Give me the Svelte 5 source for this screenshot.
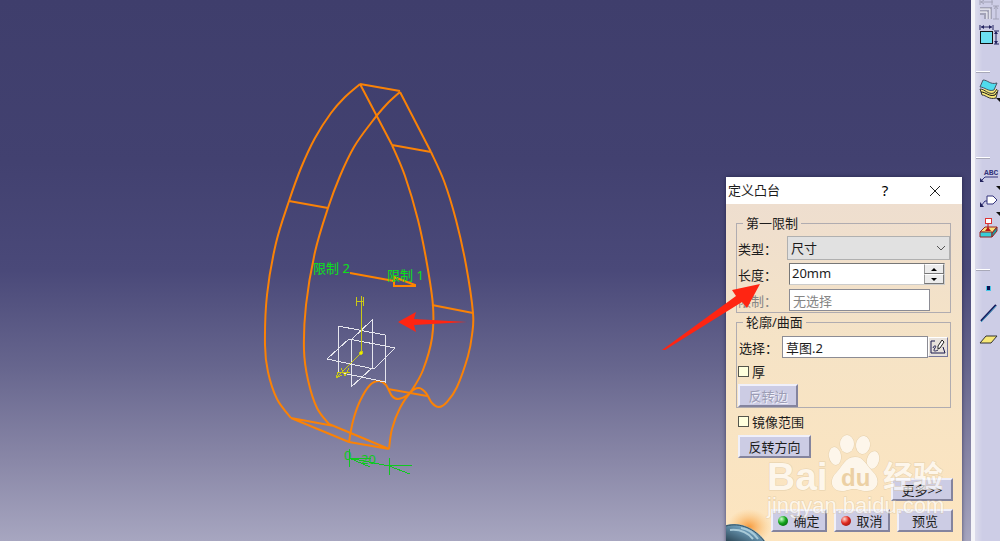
<script>
  let kind = $state("尺寸");
  let length = $state(20);
  let profile = $state("草图.2");
  let thick = $state(false);
  let mirrored = $state(false);

  let lengthText = $derived(length + "mm");

  // Catmull-Rom through all points, written as cubic segments
  function smooth(pts) {
    let d = `M${pts[0][0]} ${pts[0][1]}`;
    for (let i = 0; i < pts.length - 1; i++) {
      const a = pts[i - 1] || pts[i];
      const b = pts[i];
      const c = pts[i + 1];
      const e = pts[i + 2] || c;
      d += `C${b[0] + (c[0] - a[0]) / 6} ${b[1] + (c[1] - a[1]) / 6} ${c[0] - (e[0] - b[0]) / 6} ${c[1] - (e[1] - b[1]) / 6} ${c[0]} ${c[1]}`;
    }
    return d;
  }

  const curves = [
    // left sides, back and front
    [[360, 84], [345, 97], [331, 113], [315, 138], [301, 168], [289, 201], [276, 243], [267, 295], [265, 345], [268, 372], [277, 399], [291, 418]],
    [[400, 92], [386, 105], [371, 123], [354, 147], [340, 176], [328, 208], [315, 252], [306, 305], [304, 350], [308, 380], [317, 408], [329, 424]],
    // right sides
    [[392, 145], [405, 176], [418, 220], [427, 264], [433, 306], [432, 338], [423, 370], [412, 390], [406, 396], [398, 399], [392, 396], [386, 385], [379, 381], [370, 385], [360, 401], [353, 421], [349, 442]],
    [[431, 152], [444, 181], [456, 220], [466, 265], [473, 313], [472, 335], [468, 356], [457, 387], [447, 402], [439, 407], [432, 403], [426, 393], [419, 388], [411, 392], [400, 408], [392, 429], [389, 449]]
  ];

  const edges =
    "M360 84L400 91M360 84L392 145M400 92L431 152M392 145L431 152M289 201L328 208" +
    "M432 305L473 313M388 389L427 396M291 418L334 426M291 418L349 442M329 424L389 449M349 442L389 449";

  const toolGroups = [
    ["grid", "size"],
    ["layers"],
    ["text", "flag", "datum"],
    ["point", "line", "plane"]
  ];
</script>

<div class="app">
  <main class="viewport">
    <svg class="scene" role="img" aria-label="model">
      <g class="wire">
        {#each curves as c}
          <path d={smooth(c)} />
        {/each}
        <path d={edges} />
      </g>
      <g class="planes">
        <path d="M338 326L385 335V382L338 372ZM372 320V368L351 387V340ZM327 359L349 339L395 348L374 369Z" />
      </g>
      <g class="axis">
        <path d="M361 353V308M361 353L336 378M336 378L338 372M336 378L342 375" />
        <path d="M356 297V306M356 301H363M363 297V306M361 296V308" />
        <path d="M341 368L345 376L349 368M338 372H350" />
        <circle cx="361" cy="353" r="1.5" />
      </g>
      <path class="dir" d="M350 273L394 281M415 285L394 277V286H415Z" />
      <g class="dims">
        <path d="M349 449V467M349 458H371M349 458L370 467M349 458L389 466M389 458V475M389 466L412 465M389 466L410 474" />
        <text x="344" y="460">0</text>
        <text x="361" y="464">20</text>
      </g>
      <text class="limit" x="313" y="273">限制 2</text>
      <text class="limit" x="387" y="280">限制 1</text>
      <path class="marker" d="M398 322L416 312L414 319L467 322L414 325L416 332Z" />
    </svg>

    <section class="dialog" aria-label="定义凸台">
      <header>
        <h1>定义凸台</h1>
        <button class="cap" aria-label="help">?</button>
        <button class="cap" aria-label="close">
          <svg width="12" height="12" viewBox="0 0 12 12"><path d="M1 1L11 11M11 1L1 11" /></svg>
        </button>
      </header>

      <div class="body">
        <fieldset>
          <legend>第一限制</legend>
          <div class="row">
            <label for="kind">类型：</label>
            <div class="pick">
              <select id="kind" bind:value={kind}>
                <option>尺寸</option>
                <option>直到下一个</option>
              </select>
              <svg width="10" height="6" viewBox="0 0 10 6"><path d="M1 1L5 5L9 1" /></svg>
            </div>
          </div>
          <div class="row">
            <label for="len">长度：</label>
            <div class="spin">
              <input id="len" type="text" value={lengthText} />
              <div class="steps">
                <button aria-label="up" onclick={() => length++}><svg width="6" height="3"><path d="M0 3L3 0L6 3Z" /></svg></button>
                <button aria-label="down" onclick={() => length--}><svg width="6" height="3"><path d="M0 0L3 3L6 0Z" /></svg></button>
              </div>
            </div>
          </div>
          <div class="row off">
            <label for="lim">限制：</label>
            <input id="lim" class="box" type="text" value="无选择" disabled />
          </div>
        </fieldset>

        <fieldset class="profile">
          <legend>轮廓/曲面</legend>
          <div class="row">
            <label for="prof">选择：</label>
            <input id="prof" class="box" type="text" bind:value={profile} />
            <button class="sketch" aria-label="sketch">
              <svg width="16" height="16" viewBox="0 0 16 16">
                <path d="M5 2H1V14H15L13 8" fill="none" stroke="#18184c" />
                <path d="M3 9C4 6 7 6 5 9S4 13 8 11" fill="none" stroke="#18184c" />
                <path d="M8 10L8 7L12 1L14 3L10 9Z" fill="#fff" stroke="#222" />
              </svg>
            </button>
          </div>
          <label class="check"><input type="checkbox" bind:checked={thick} />厚</label>
          <button class="btn side" disabled>反转边</button>
        </fieldset>

        <label class="check mirror"><input type="checkbox" bind:checked={mirrored} />镜像范围</label>
        <button class="btn reverse">反转方向</button>
        <div class="more"><button class="btn">更多&gt;&gt;</button></div>

        <footer>
          <button class="btn"><i class="dot green"></i>确定</button>
          <button class="btn"><i class="dot red"></i>取消</button>
          <button class="btn">预览</button>
        </footer>
        <svg class="planet" width="44" height="32" viewBox="0 0 44 32" aria-hidden="true">
          <defs>
            <radialGradient id="glow"><stop offset="0" stop-color="#f79a3c" /><stop offset="1" stop-color="#fbc274" stop-opacity="0" /></radialGradient>
            <linearGradient id="globe" x1="1" y1="0" x2="0" y2="1"><stop offset="0" stop-color="#c4dce6" /><stop offset="0.4" stop-color="#6f9fbc" /><stop offset="1" stop-color="#2c4656" /></linearGradient>
          </defs>
          <ellipse cx="23" cy="18" rx="22" ry="18" fill="url(#glow)" />
          <path d="M0 16C14 12 30 19 39 32H0Z" fill="url(#globe)" />
          <path d="M0 17C14 13 29 20 38 32" fill="none" stroke="#36505e" />
          <path d="M4 21C14 20 22 24 27 30M15 19C22 20 28 24 32 30" fill="none" stroke="#a9cad8" stroke-width="2" />
        </svg>
      </div>

      <svg class="watermark" width="190" height="90" viewBox="0 0 190 90" aria-hidden="true">
        <text class="bai" x="5" y="58">Bai</text>
        <g class="paw">
          <ellipse cx="73" cy="24" rx="6" ry="9" transform="rotate(-10 73 24)" />
          <ellipse cx="85" cy="12" rx="7" ry="9" />
          <ellipse cx="101" cy="13" rx="7" ry="9" transform="rotate(8 101 13)" />
          <ellipse cx="111" cy="28" rx="6" ry="9" transform="rotate(15 111 28)" />
          <path d="M93 25C102 25 104 33 111 40C119 48 116 59 105 59C98 59 97 57 92 57S85 59 80 59C69 59 67 48 74 41C81 34 83 25 93 25Z" />
        </g>
        <text class="du" x="79" y="54">du</text>
        <text class="jy" x="121" y="55">经验</text>
        <text class="url" x="5" y="81">jingyan.baidu.com</text>
      </svg>
    </section>

    <svg class="pointer" width="100" height="70" viewBox="0 0 100 70" aria-hidden="true">
      <path d="M0 69L74 15L70 9L98 3L85 27L80 21L3 69Z" />
    </svg>
  </main>

  <nav class="tools">
    {#each toolGroups as group}
      <div class="group">
        {#each group as tool}
          <button class="tool" aria-label={tool}>
            <svg width="24" height="25" viewBox="0 0 24 25">
              {#if tool === "grid"}
                <g fill="none" stroke="#a3a3b8">
                  <path d="M4 5H17M4 3V8M16 3V8M20 9V22M17 9H23M17 22H23M5 5L8 3M5 5L8 7M20 9L18 12M20 9L22 12" />
                  <path d="M4 11H15V22M4 14H12V22M4 17H9V22" stroke-width="2" />
                  <path d="M4 12H14V22M4 15H11V22" stroke="#eee" />
                </g>
              {:else if tool === "size"}
                <rect x="4.500" y="8.500" width="12" height="12" fill="#6de0f2" stroke="#111" />
                <path d="M5 4H16M4 2V7M17 2V7M20 9V21M18 8H23M18 21H23" fill="none" stroke="#222260" />
                <path d="M5 4L8 2V6ZM16 4L13 2V6ZM20 8L18 11H22ZM20 21L18 18H22Z" fill="#222260" />
              {:else if tool === "layers"}
                <path d="M4 12L6 18C10 18 13 23 20 21L22 13" fill="#f7e878" stroke="#333" />
                <path d="M4 12C9 12 12 18 18 16L21 12" fill="#f7e878" stroke="#333" />
                <path d="M5 15C10 15 13 20 19 18L21 15" fill="none" stroke="#111" />
                <path d="M7 3C12 3 14 8 21 6L18 13C12 15 9 10 4 10Z" fill="#4fdced" stroke="#456" />
                <path class="more-mark" d="M20 21H24V25Z" />
              {:else if tool === "text"}
                <text x="8" y="12">ABC</text>
                <path d="M5 18L9 14H22" fill="none" stroke="#34347c" />
                <path d="M4 15L8 19H4Z" fill="#22225c" />
                <path class="more-mark" d="M20 23H24V27Z" />
              {:else if tool === "flag"}
                <path d="M11 7H17L21 11L17 15H11Z" fill="#fff" stroke="#34347c" />
                <path d="M11 12H9L5 17" fill="none" stroke="#34347c" />
                <path d="M4 13L8 18H4Z" fill="#22225c" />
                <path class="more-mark" d="M20 23H24V27Z" />
              {:else if tool === "datum"}
                <path d="M4 17L9 12H21L16 18Z" fill="#f7e07a" stroke="#922" />
                <path d="M4 17H16V22H4Z" fill="#37cfd8" stroke="#922" />
                <path d="M16 18L21 12V16L16 22Z" fill="#189aa0" stroke="#922" />
                <rect x="9.500" y="3.500" width="6" height="5" fill="#fff" stroke="#d33" />
                <path d="M12 9V13" stroke="#b11" />
                <path d="M9 16L12 12L15 16Z" fill="#b11" />
              {:else if tool === "point"}
                <rect x="10" y="11" width="5" height="5" fill="#45c6e8" />
                <rect x="11" y="11" width="3" height="4" fill="#101050" />
              {:else if tool === "line"}
                <path d="M5 20L20 4" stroke="#16165a" stroke-width="2" />
                <path d="M5 21L20 5" stroke="#3a9ac0" />
              {:else}
                <path d="M4 16L10 9H21L15 16Z" fill="#f7e878" stroke="#333" />
              {/if}
            </svg>
          </button>
        {/each}
      </div>
    {/each}
  </nav>
</div>

<style>
  :global(body) { margin: 0; overflow: hidden; }
  .app {
    display: flex;
    height: 100vh;
    overflow: hidden;
    font-family: "Noto Sans", "Noto Sans CJK SC", sans-serif;
    font-size: 13px;
    color: #1c1c1c;
  }
  .viewport {
    position: relative;
    flex: 1;
    overflow: hidden;
    background: linear-gradient(#3f3e6c 0%, #424170 30%, #4a4979 50%, #67668e 68%, #8987a7 85%, #a7a6c0 100%);
  }
  .scene { display: block; width: 100%; height: 100%; fill: none; }
  .wire { stroke: #fa8206; stroke-width: 2; }
  .planes { stroke: #e6e6ee; shape-rendering: crispEdges; }
  .axis { stroke: #c9c916; shape-rendering: crispEdges; }
  .axis circle { fill: #eded00; }
  .dir { stroke: #ff8400; stroke-width: 2; }
  .dims { stroke: #10c820; shape-rendering: crispEdges; }
  .dims text { stroke: none; fill: #10c820; font-size: 13px; }
  .limit { fill: #0be318; font-size: 13px; }
  .marker, .pointer path { fill: #ff2512; }

  .dialog {
    position: absolute;
    top: 177px;
    right: 9px;
    width: 236px;
    box-shadow: 0 0 4px rgba(20, 20, 50, 0.6);
  }
  header { display: flex; align-items: center; height: 27px; padding-right: 2px; background: #fff; }
  h1 { flex: 1; margin: 0; padding: 0 0 2px 2px; font-size: 13px; font-weight: 400; }
  .cap { width: 50px; padding: 0 0 2px; border: 0; background: none; font: inherit; font-size: 15px; }
  .cap svg { fill: none; stroke: #222; vertical-align: middle; }
  .body {
    position: relative;
    padding: 10px 9px 12px 10px;
    background: linear-gradient(#eedecf, #f5e3c6 40%, #fde5bf);
  }
  fieldset {
    min-width: 0;
    margin: 0 2px 0 0;
    padding: 4px 0 1px 1px;
    border: 1px solid #b0acb0;
  }
  legend { margin-left: 5px; padding: 0 3px; line-height: 18px; }
  .row { display: flex; align-items: center; }
  .row label { flex: none; width: 51px; }
  .row + .row { margin-top: 3px; }
  .row + .off { margin-top: 4px; }
  .pick { position: relative; flex: 1; margin-left: -2px; }
  select {
    display: block;
    width: 100%;
    height: 24px;
    padding: 0 3px;
    appearance: none;
    border: 1px solid #b0b0b0;
    border-radius: 0;
    background: #e1e1e1;
    font: inherit;
    color: inherit;
  }
  .pick svg { position: absolute; right: 4px; top: 9px; fill: none; stroke: #555; }
  .spin {
    display: flex;
    flex: 1;
    min-width: 0;
    height: 20px;
    margin-right: 5px;
    border: 1px solid #777;
    border-right-color: #ccc;
    border-bottom-color: #ccc;
    background: #fff;
  }
  .spin input { flex: 1; min-width: 0; padding: 0 2px 2px; border: 0; font: inherit; color: inherit; }
  .steps { display: flex; flex: none; flex-direction: column; width: 20px; }
  .steps button {
    display: flex;
    flex: 1;
    align-items: center;
    justify-content: center;
    padding: 0;
    border: 1px solid;
    border-color: #fff #777 #777 #999;
    background: #ececec;
  }
  .box {
    flex: 1;
    min-width: 0;
    box-sizing: border-box;
    height: 22px;
    padding: 0 3px;
    border: 1px solid #8c8c94;
    background: #fff;
    font: inherit;
    color: inherit;
  }
  .off { color: #858585; }
  .off .box { margin-right: 20px; }
  .profile { padding: 5px 0 0 1px; }
  .profile .row label { width: 43px; padding-left: 1px; }
  .profile .row { padding-right: 2px; }
  .sketch {
    width: 20px;
    height: 20px;
    padding: 0 1px;
    border: 1px solid;
    border-color: #fff #77779a #77779a #fff;
    background: #e8e2dc;
  }
  .sketch svg { display: block; }
  .check { display: flex; align-items: center; gap: 3px; height: 18px; margin-top: 4px; }
  .check input {
    width: 11px;
    height: 11px;
    margin: 0;
    appearance: none;
    border: 1px solid #55554c;
    background: #ffffdd;
  }
  .check input:checked { background: #444; }
  .btn {
    display: flex;
    align-items: center;
    justify-content: center;
    gap: 5px;
    box-sizing: border-box;
    width: 56px;
    height: 23px;
    padding: 0;
    border: 2px solid;
    border-color: #f0f0fa #84849e #84849e #f0f0fa;
    background: #cccce4;
    font: inherit;
    color: inherit;
  }
  .side { width: 60px; margin-top: 4px; }
  .side:disabled { color: #9c9cb4; text-shadow: 1px 1px #f2f2fa; }
  .mirror { margin: 4px 0 0 2px; }
  .reverse { width: 73px; margin: 5px 0 0 2px; }
  .more { display: flex; justify-content: flex-end; margin-top: 20px; }
  .more .btn { width: 62px; }
  footer { display: flex; justify-content: flex-end; gap: 7px; margin-top: 8px; }
  .dot { width: 10px; height: 10px; border-radius: 50%; }
  .green { background: radial-gradient(circle at 35% 30%, #d0ffd0, #14a51c 45%, #064d0a); }
  .red { background: radial-gradient(circle at 35% 30%, #ffd8d0, #e02a20 45%, #7c1010); }
  .planet { position: absolute; left: 0; bottom: 3px; }
  .watermark { position: absolute; left: 36px; top: 255px; pointer-events: none; opacity: 0.68; }
  .watermark text, .paw { fill: #fff; stroke: #dcc8a4; stroke-width: 1; paint-order: stroke; }
  .bai { font: 700 39px "Liberation Sans", sans-serif; }
  .watermark .du { fill: #e6c898; stroke: none; font: 700 24px "Liberation Sans", sans-serif; }
  .jy { font: 700 30px "Noto Sans CJK SC", sans-serif; }
  .url { font: 22px "Liberation Sans", sans-serif; }
  .pointer { position: absolute; top: 281px; right: 209px; pointer-events: none; }

  .tools {
    flex: none;
    width: 24px;
    padding-left: 1px;
    border-left: 4px solid #f4f4f8;
    background: linear-gradient(90deg, #dcdcec, #cdcde6 30%);
    overflow: hidden;
  }
  .group { display: flex; flex-direction: column; gap: 1px; height: 112px; }
  .group::before { content: ""; width: 14px; height: 1px; background: #fff; border-bottom: 1px solid #a8a8b8; }
  .group:nth-child(1) { height: 74px; margin-top: -3px; }
  .group:nth-child(1)::before { display: none; }
  .group:nth-child(2) { height: 86px; }
  .group:nth-child(n + 2) .tool:first-child { margin-top: 3px; }
  .tool { width: 24px; height: 25px; padding: 0; border: 0; background: none; }
  .tool svg { display: block; overflow: visible; }
  .tool text { font: 700 8px "Liberation Mono", monospace; fill: #34347c; }
  .more-mark { fill: #111; }
</style>
